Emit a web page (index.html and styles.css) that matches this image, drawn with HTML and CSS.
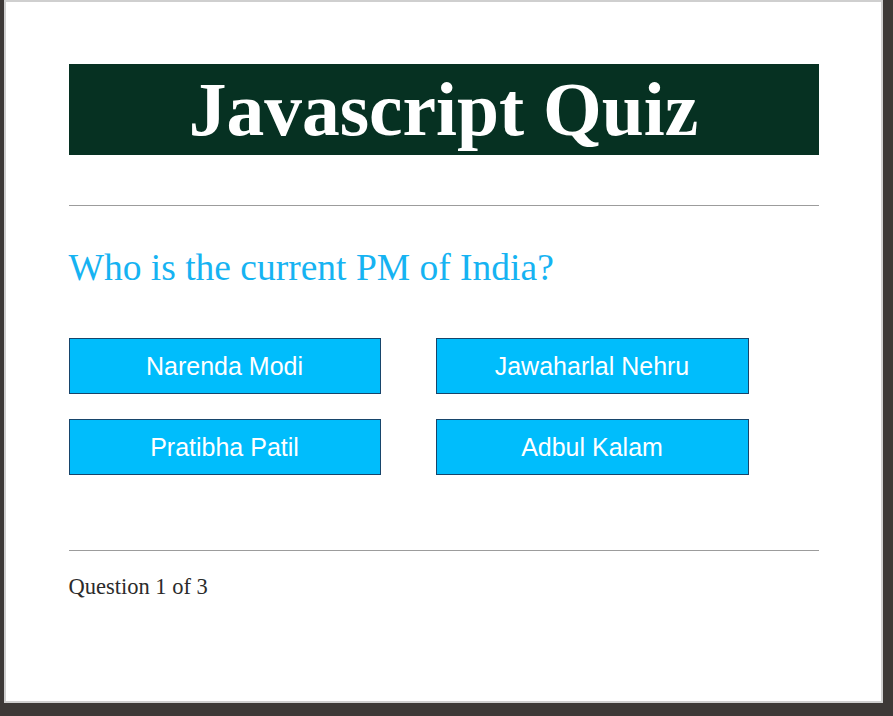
FILE: index.html
```html
<!DOCTYPE html>
<html>
<head>
<meta charset="utf-8">
<link rel="stylesheet" href="styles.css">
</head>
<body>
<div class="window">
  <div class="quiz">
    <h1 class="title">Javascript Quiz</h1>
    <hr class="rule rule-top">
    <p class="question">Who is the current PM of India?</p>
    <div class="choices">
      <button class="choice">Narenda Modi</button>
      <button class="choice">Jawaharlal Nehru</button>
      <button class="choice">Pratibha Patil</button>
      <button class="choice">Adbul Kalam</button>
    </div>
    <hr class="rule rule-bottom">
    <p class="progress">Question 1 of 3</p>
  </div>
</div>
</body>
</html>
```
FILE: styles.css
```css
html, body {
  margin: 0;
  padding: 0;
  background: #3d3937;
  height: 716px;
  overflow: hidden;
}
.window {
  box-sizing: border-box;
  margin: 0 10px 0 4px;
  height: 703px;
  background: #ffffff;
  border: 2px solid #cfcfcf;
  padding-top: 62px;
}
.quiz {
  width: 750px;
  margin: 0 auto;
  font-family: "Liberation Serif", "Times New Roman", serif;
}
.title {
  margin: 0;
  height: 91px;
  background: #063122;
  color: #ffffff;
  text-align: center;
  font-size: 75.5px;
  font-weight: bold;
  line-height: 91px;
}
.rule {
  margin: 0;
  border: 0;
  height: 1px;
  background: #9c9c9c;
}
.rule-top {
  margin-top: 50px;
}
.question {
  margin: 40px 0 0;
  font-size: 37.5px;
  line-height: 44px;
  color: #16b3f2;
}
.choices {
  margin-top: 48px;
  display: grid;
  grid-template-columns: 312px 313px;
  column-gap: 55px;
  row-gap: 25px;
}
.choice {
  height: 56px;
  background: #00bdfc;
  border: 1px solid #17456b;
  color: #ffffff;
  font-family: "Liberation Sans", Arial, sans-serif;
  font-size: 25px;
  padding: 0;
}
.rule-bottom {
  margin-top: 75px;
}
.progress {
  margin: 23px 0 0;
  font-size: 22.5px;
  color: #2b2b2b;
}
```
